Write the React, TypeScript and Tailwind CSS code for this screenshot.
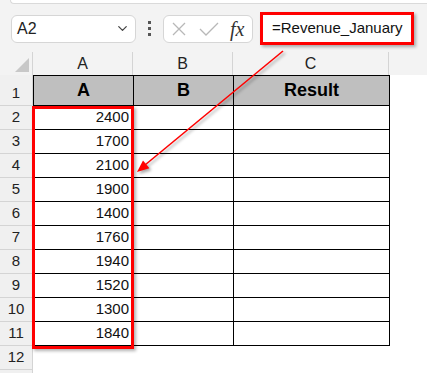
import React from 'react';
import { ChevronDown } from 'lucide-react';

const values = [2400, 1700, 2100, 1900, 1400, 1760, 1940, 1520, 1300, 1840];

const RowNum = ({ n, h }: { n?: number; h: string }) => (
    <div className={`w-[33px] ${h} shrink-0 bg-[#f0f0f0] border-r border-b border-[#d4d4d4] flex items-end justify-center pb-[1px] text-[15px] text-[#222]`}>
        {n}
    </div>
);

export default function App() {
    return (
        <div className="relative w-[427px] h-[373px] overflow-hidden bg-white font-['Liberation_Sans',Arial,sans-serif]">
            {/* toolbar */}
            <div className="h-[52px] bg-[#f3f3f3] flex flex-col">
                <div className="ml-[10px] h-[4px] bg-white border-b border-l border-[#dadada] rounded-bl-[6px]" />
                <div className="mt-[8px] h-[33px] flex items-center">
                    <div className="ml-[11px] w-[125px] h-[28px] bg-white border border-[#d6d6d6] rounded-[6px] flex items-center justify-between pl-[5px] pr-[5px]">
                        <span className="text-[16px] text-[#222]">A2</span>
                        <ChevronDown className="w-[15px] h-[15px] text-[#444]" strokeWidth={2} />
                    </div>
                    <div className="ml-[12px] flex flex-col gap-[3px]">
                        <div className="w-[3px] h-[3px] bg-[#555]" />
                        <div className="w-[3px] h-[3px] bg-[#555]" />
                        <div className="w-[3px] h-[3px] bg-[#555]" />
                    </div>
                    <div className="ml-[12px] w-[90px] h-[28px] bg-white border border-[#d6d6d6] rounded-[6px] flex items-center pl-[7px]">
                        <svg width="16" height="16" viewBox="0 0 16 16" className="text-[#b8b8b8]">
                            <path d="M2 2L14 14M14 2L2 14" stroke="currentColor" strokeWidth="1.3" fill="none" />
                        </svg>
                        <svg width="20" height="16" viewBox="0 0 20 16" className="ml-[12px] text-[#b8b8b8]">
                            <path d="M1 8L7 14L19 2" stroke="currentColor" strokeWidth="1.3" fill="none" />
                        </svg>
                        <span className="ml-[11px] text-[20px] leading-none italic font-['Liberation_Serif',serif] text-[#333]">fx</span>
                    </div>
                    <div className="ml-[7px] w-[154px] h-[33px] bg-white border-[3px] border-[#ff0000] shadow-[2px_2px_3px_rgba(0,0,0,0.3)] flex items-center pl-[9px]">
                        <span className="text-[15px] text-[#111]">=Revenue_January</span>
                    </div>
                </div>
            </div>

            {/* sheet */}
            <div className="flex flex-col">
                {/* column headers */}
                <div className="flex h-[23px] bg-[#f3f3f3]">
                    <div className="w-[33px] shrink-0 border-r border-[#d4d4d4] relative">
                        <svg width="14" height="14" viewBox="0 0 14 14" className="absolute right-[3px] bottom-[3px]">
                            <path d="M14 0L14 14L0 14Z" fill="#c8c8c8" />
                        </svg>
                    </div>
                    <div className="w-[100px] shrink-0 border-r border-[#d4d4d4] flex items-center justify-center text-[16px] text-[#222]">A</div>
                    <div className="w-[100px] shrink-0 border-r border-[#d4d4d4] flex items-center justify-center text-[16px] text-[#222]">B</div>
                    <div className="w-[156px] shrink-0 border-r border-[#d4d4d4] flex items-center justify-center text-[16px] text-[#222]">C</div>
                    <div className="flex-1" />
                </div>

                {/* row 1 */}
                <div className="flex">
                    <RowNum n={1} h="h-[31px]" />
                    <div className="w-[101px] h-[31px] shrink-0 bg-[#bfbfbf] border border-black flex items-center justify-center text-[18px] font-bold text-black">A</div>
                    <div className="w-[100px] h-[31px] shrink-0 bg-[#bfbfbf] border-y border-r border-black flex items-center justify-center text-[18px] font-bold text-black">B</div>
                    <div className="w-[156px] h-[31px] shrink-0 bg-[#bfbfbf] border-y border-r border-black flex items-center justify-center text-[18px] font-bold text-black">Result</div>
                </div>

                {values.map((v, i) => (
                    <div key={v + '-' + i} className="flex">
                        <RowNum n={i + 2} h="h-[24px]" />
                        <div className="w-[101px] h-[24px] shrink-0 border-x border-b border-black flex items-end justify-end pr-[4px] pb-[1px] text-[15px] text-[#111]">{v}</div>
                        <div className="w-[100px] h-[24px] shrink-0 border-r border-b border-black" />
                        <div className="w-[156px] h-[24px] shrink-0 border-r border-b border-black" />
                    </div>
                ))}

                <div className="flex">
                    <RowNum n={12} h="h-[24px]" />
                </div>
                <div className="flex">
                    <RowNum h="h-[24px]" />
                </div>
            </div>

            {/* highlight box around A2:A11 */}
            <div className="absolute left-[32px] top-[106px] w-[102px] h-[243px] border-[3px] border-[#ff0000] shadow-[2px_2px_3px_rgba(0,0,0,0.3)] pointer-events-none" />

            {/* arrow */}
            <svg width="427" height="373" className="absolute left-0 top-0 pointer-events-none drop-shadow-[2px_2px_1.5px_rgba(0,0,0,0.35)]">
                <line x1="283" y1="51" x2="145" y2="165" stroke="#ff0000" strokeWidth="1.6" />
                <polygon points="137,172 149.4,168.2 143,160.5" fill="#ff0000" />
            </svg>
        </div>
    );
}
